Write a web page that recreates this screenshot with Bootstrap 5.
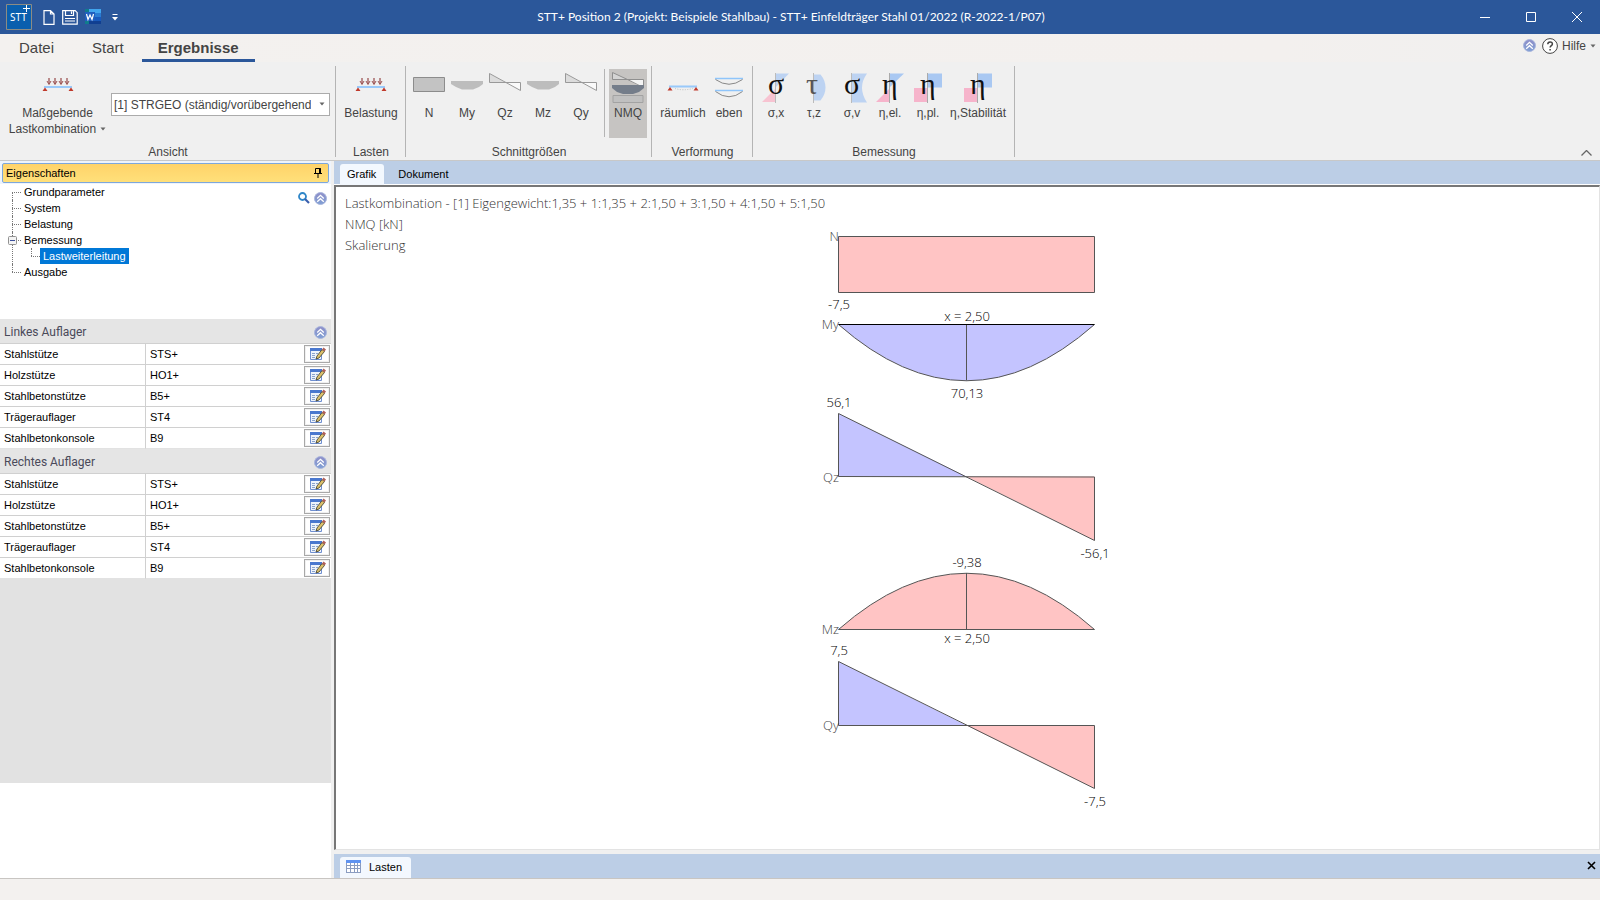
<!DOCTYPE html>
<html lang="de">
<head>
<meta charset="utf-8">
<meta name="viewport" content="width=device-width, initial-scale=1">
<title>STT+ Position 2</title>
<link href="https://cdn.jsdelivr.net/npm/bootstrap@5.3.0/dist/css/bootstrap.min.css" rel="stylesheet">
<style>
  body { font-family: "Liberation Sans", Arial, sans-serif; font-size: 12px; line-height: 16px; color: #444; background: #f0f0f0; }
  button { background: none; border: 0; padding: 0; color: inherit; }
  svg { display: block; flex: none; }
  .titlebar { background: #2b579a; color: #fff; height: 34px; font-family: Lato, sans-serif; }
  .quick { width: 314px; gap: 7px; padding-left: 6px; }
  .wincontrols { width: 332px; gap: 36px; padding-right: 18px; }
  .applogo { width: 26px; height: 26px; }
  .side { width: 331px; }
  .ribbontabs { height: 28px; background: linear-gradient(90deg, #f3f1ef, #f3f0ee 80%, #f0f0f0); font-size: 15px; padding-left: 19px; }
  .ribbontabs a { color: #444; text-decoration: none; height: 28px; line-height: 28px; margin-right: 38px; }
  .ribbontabs a.current { font-weight: bold; border-bottom: 3px solid #2b579a; padding: 0 16px; margin: 0 0 0 -20px; }
  .help { font-size: 12px; height: 23px; gap: 6px; }
  .ribbon { height: 99px; padding-top: 4px; border-bottom: 1px solid #c8c8c8; }
  .rgroup { border-right: 1px solid #b4b4b4; height: 91px; display: flex; flex-direction: column; justify-content: space-between; padding: 3px 3px 0 4px; }
  .glabel { line-height: 10px; text-align: center; }
  .tool { flex: none; width: 38px; height: 69px; display: flex; flex-direction: column; align-items: center; padding-top: 4px; white-space: nowrap; }
  .tool svg { overflow: visible; }
  .tool.pressed { background: #c6c4c2; }
  .tool.w-l { width: 58px; } .tool.w-m { width: 54px; } .tool.w-s { width: 62px; } .tool.w-xl { width: 107px; }
  .rule { width: 1px; height: 68px; background: #b4b4b4; margin: 0 4px; }
  .combo { width: 219px; height: 23px; }
  .combo select { appearance: none; width: 100%; height: 23px; border: 1px solid #ababab; border-radius: 0; background: #fff; padding: 0 18px 0 2px; color: #444; }
  .combo svg { position: absolute; right: 5px; top: 9px; pointer-events: none; }
  .props { background: #fff; font-size: 11px; color: #000; }
  .prophead { background: #eef4fc; padding: 2px 2px 0; height: 23px; }
  .prophead > div { height: 20px; border: 1px solid #7da7dc; border-radius: 2px; background: linear-gradient(#ffd369, #ffe07a); padding: 0 6px 0 3px; }
  .treebox { height: 135px; padding: 0 4px 0 12px; }
  .tree, .tree ul { list-style: none; margin: 0; padding: 0; }
  .tree li { position: relative; padding-left: 12px; }
  .tree li::before { content: ""; position: absolute; left: 0; top: 8px; width: 9px; border-top: 1px dotted #777; }
  .tree li::after { content: ""; position: absolute; left: 0; top: 0; bottom: 0; border-left: 1px dotted #777; }
  .tree li:first-child::after { top: 8px; }
  .tree li:last-child::after { bottom: auto; height: 8px; top: 0; }
  .tree ul { padding-left: 7px; }
  .tree a { color: #000; text-decoration: none; display: block; width: max-content; }
  .tree a.picked { background: #0078d7; color: #fff; padding: 0 3px; margin-left: -3px; }
  .expander { position: absolute; left: -4px; top: 4px; z-index: 1; }
  .secthead { background: #e5e5e5; height: 25px; padding: 2px 4px 0; font: 12px/22px Roboto, sans-serif; color: #4a4a5a; border-bottom: 1px solid #d0d0d0; }
  .ptable { width: 100%; border-collapse: separate; border-spacing: 0; }
  .ptable th, .ptable td { height: 21px; border-bottom: 1px solid #d0d0d0; padding: 0 0 0 4px; font-weight: normal; line-height: 18px; }
  .ptable th { width: 146px; border-right: 1px solid #d0d0d0; }
  .ptable tr:last-child > * { border-bottom-color: #e2e2e2; }
  .ptable .edit { width: 27px; padding: 0 1px 0 0; }
  .edit button { width: 26px; height: 18px; border: 1px solid #a8a8a8; background: #f0f0f0; display: flex; align-items: center; justify-content: center; }
  .filler { background: #e2e2e2; height: 204px; }
  .workarea { margin-left: 3px; }
  .strip { background: #bccee6; font-size: 11px; color: #000; }
  .strip.top { height: 24px; padding: 3px 6px 0; gap: 6px; border-bottom: 1px solid #fff; }
  .strip.bottom { height: 24px; padding: 3px 4px 0 6px; }
  .strip button { height: 21px; border-radius: 3px 3px 0 0; padding: 0 8px 2px; }
  .strip button.on { background: #f3f8fe; }
  .strip.top .on { padding: 0 8px 2px 7px; }
  .strip.bottom .on { padding: 0 9px 2px 6px; }
  .doc { background: #fff; border: solid; border-width: 2px 1px 1px 2px; border-color: #777 #e3e3e3 #e3e3e3 #777; display: grid; font-family: "Open Sans", sans-serif; font-size: 13px; font-weight: 300; }
  .doc > * { grid-area: 1 / 1; }
  .caption { padding: 6px 9px; line-height: 21px; color: #333; white-space: nowrap; }
  .diagram { justify-self: center; overflow: visible; fill: #000; }
  .diagram .ax { fill: #444; text-anchor: end; }
  .diagram .v { text-anchor: middle; }
  .diagram .neg { fill: #ffc4c4; } .diagram .pos { fill: #c4c4ff; }
  .diagram .ln { fill: none; stroke: #555; }
  .status { height: 22px; background: #f3f1ef; border-top: 1px solid #c8c5c2; }
</style>
</head>
<body class="d-flex flex-column min-vh-100">
<svg width="0" height="0" class="position-absolute" aria-hidden="true">
  <defs>
    <linearGradient id="gb" x2="0" y2="1"><stop stop-color="#8f8fc8"/><stop offset="1" stop-color="#7f9fd4"/></linearGradient>
    <symbol id="up" viewBox="0 0 13 13"><circle cx="6.500" cy="6.500" r="6" fill="url(#gb)" stroke="#a9b6dd"/><path d="M3.200 6.500 6.500 3.400 9.800 6.500M3.200 9.800 6.500 6.700 9.800 9.800" fill="none" stroke="#fff" stroke-width="1.300"/></symbol>
    <symbol id="load" viewBox="0 0 32 32"><path d="M7 5v6M13 5v6M19 5v6M25 5v6" stroke="#a86a6a" stroke-width="1.500"/><path d="M5 8l2 3.500L9 8M11 8l2 3.500L15 8M17 8l2 3.500L21 8M23 8l2 3.500L27 8" stroke="#9a5252" fill="none"/><path d="M2 14h28" stroke="#99c9fa" stroke-width="2"/><path d="M.500 18 3 14.500 5.500 18zM26.500 18 29 14.500 31.500 18z" fill="#c0392b"/></symbol>
    <symbol id="moment" viewBox="0 0 32 32"><path d="M0 8h32v3l-4 3-6 2.500H11L5 14 0 11z" fill="#bdbdbd"/></symbol>
    <symbol id="shear" viewBox="0 0 32 32"><path d="M.500.500v9H16z" fill="#dcdcdc"/><path d="M16 9.500h15.500v8z" fill="#fafafa"/><path d="M.500 9.500V.500L31.500 17.500v-8z" fill="none" stroke="#999"/></symbol>
    <symbol id="edit" viewBox="0 0 22 14"><path d="M0 0h22v14H0z" fill="#fff"/><path d="M4.500 1.500h11v11h-11z" fill="#eef3fb" stroke="#6f8fd0"/><path d="M4 1h12v3H4z" fill="#4a78cf"/><path d="M6 6.500h3M6 8.500h3M6 10.500h3M10 6.500h2" stroke="#8aa3cc"/><path d="M10 12 11 9 16 2.500 18.500 4.500 13 11z" fill="#dcc06a" stroke="#3a3a2a" stroke-width=".8"/><path d="M16 2.500 17.500.500 20 2.500 18.500 4.500z" fill="#b0605a"/></symbol>
    <symbol id="dd" viewBox="0 0 6 4"><path d="M.500.500h5L3 3.500z" fill="#666"/></symbol>
  </defs>
</svg>

<header class="titlebar d-flex align-items-center">
  <div class="quick d-flex align-items-center">
    <svg class="applogo" viewBox="0 0 26 26"><path d="M.500.500h25v25H.500z" fill="#0a5fae" stroke="#8c8c84"/><text x="4" y="17" font-size="10" fill="#fff" font-family="Noto Sans">STT</text><path d="M20.500 1v7M17 4.500h7" stroke="#fff"/></svg>
    <button class="ms-1" aria-label="Neu"><svg width="12" height="15" viewBox="0 0 12 15"><path d="M1 .700h6.500L11 4v10.300H1zM7.500.700V4H11" fill="none" stroke="#fff" stroke-width="1.200"/></svg></button>
    <button aria-label="Speichern"><svg width="16" height="15" viewBox="0 0 16 15"><path d="M.700.700h12.500l2 2v11.500H.700zM3.500.700v4.800h8V.700M9.500 1.500v2.500M3 8.500h10M3 11h10" fill="none" stroke="#fff" stroke-width="1.200"/></svg></button>
    <button aria-label="Word"><svg width="16" height="16" viewBox="0 0 16 16"><path d="M4 0h12v4H4z" fill="#41a5ee"/><path d="M4 4h12v4H4z" fill="#2b7cd3"/><path d="M4 8h12v4H4z" fill="#185abd"/><path d="M0 12h16v3H0z" fill="#103f91"/><path d="M0 0h4v15H0z" fill="#107c8c"/><path d="M0 3h10v9H0z" fill="#1f5fbf"/><path d="M1.500 5 3 10.500 5 6l2 4.500L8.500 5" fill="none" stroke="#fff" stroke-width="1.200"/></svg></button>
    <button class="ms-1" aria-label="Anpassen"><svg width="6" height="7" viewBox="0 0 6 7"><path d="M.500.500h5" stroke="#fff"/><path d="M0 3h6L3 6.500z" fill="#fff"/></svg></button>
  </div>
  <div class="flex-fill text-center text-nowrap">STT+ Position 2 (Projekt: Beispiele Stahlbau) - STT+ Einfeldträger Stahl 01/2022 (R-2022-1/P07)</div>
  <div class="d-flex justify-content-end wincontrols">
    <button aria-label="Minimieren"><svg width="10" height="10"><path d="M0 5.500h10" stroke="#fff"/></svg></button>
    <button aria-label="Maximieren"><svg width="10" height="10"><path d="M.500.500h9v9h-9z" fill="none" stroke="#fff"/></svg></button>
    <button aria-label="Schließen"><svg width="10" height="10"><path d="M0 0l10 10M10 0L0 10" stroke="#fff"/></svg></button>
  </div>
</header>

<nav class="ribbontabs d-flex">
  <a href="#">Datei</a>
  <a href="#">Start</a>
  <a href="#" class="current">Ergebnisse</a>
  <div class="help ms-auto d-flex align-items-center pe-1">
    <button aria-label="Einklappen"><svg width="13" height="13"><use href="#up"/></svg></button>
    <button class="d-flex align-items-center gap-1"><svg width="16" height="16" viewBox="0 0 16 16"><circle cx="8" cy="8" r="7.400" fill="#fff" stroke="#444"/><path d="M5.800 6.200c0-3 4.600-3 4.600-.2 0 1.700-2.300 1.700-2.300 3.600M8.100 11v1.400" fill="none" stroke="#444" stroke-width="1.500"/></svg>Hilfe<svg width="6" height="4"><use href="#dd"/></svg></button>
  </div>
</nav>

<section class="ribbon d-flex">
  <div class="rgroup" style="width:336px">
    <div class="d-flex">
      <button class="tool w-xl"><svg width="32" height="32"><use href="#load"/></svg>Maßgebende<span class="d-flex align-items-center gap-1">Lastkombination <svg width="6" height="4"><use href="#dd"/></svg></span></button>
      <div class="combo position-relative mt-4"><select aria-label="Lastkombination"><option>[1] STRGEO (ständig/vorübergehend)</option></select><svg width="6" height="4"><use href="#dd"/></svg></div>
    </div>
    <div class="glabel">Ansicht</div>
  </div>
  <div class="rgroup align-items-center" style="width:70px">
    <button class="tool w-l"><svg width="32" height="32"><use href="#load"/></svg>Belastung</button>
    <div class="glabel">Lasten</div>
  </div>
  <div class="rgroup" style="width:246px">
    <div class="d-flex">
      <button class="tool"><svg width="32" height="32"><path d="M.500 4.500h31v14H.500z" fill="#c3c3c3" stroke="#8c8c8c"/></svg>N</button>
      <button class="tool"><svg width="32" height="32"><use href="#moment"/></svg>My</button>
      <button class="tool"><svg width="32" height="32"><use href="#shear"/></svg>Qz</button>
      <button class="tool"><svg width="32" height="32"><use href="#moment"/></svg>Mz</button>
      <button class="tool"><svg width="32" height="32"><use href="#shear"/></svg>Qy</button>
      <div class="rule"></div>
      <button class="tool pressed"><svg width="32" height="32"><path d="M.500 6.500v-7L31.500 14V6.500z" fill="#d4d4d4" stroke="#8f8f8f"/><path d="M18 7h13v7z" fill="#f4f4f4"/><path d="M0 12h32v3l-5 4-6 2H11l-6-2-5-4z" fill="#747d8a"/><path d="M1 22.500h30v7H1z" fill="#c0c0c0" stroke="#a2a2a2"/></svg>NMQ</button>
    </div>
    <div class="glabel">Schnittgrößen</div>
  </div>
  <div class="rgroup" style="width:101px">
    <div class="d-flex">
      <button class="tool w-m"><svg width="32" height="32"><path d="M2 13.500h28" stroke="#99c9fa" stroke-width="2"/><path d="M8 15.500 Q16 18 26 15.500" fill="none" stroke="#bbb" stroke-dasharray="1 1.500"/><path d="M.500 17.500 3 14 5.500 17.500zM26.500 17.500 29 14 31.500 17.500z" fill="#c0392b"/></svg>räumlich</button>
      <button class="tool"><svg width="32" height="32"><path d="M2 5.500h28M2 17.500h28" stroke="#8fc5fb" stroke-width="1.500"/><path d="M2.500 6.500Q16 16 29.500 6.500M2.500 18.500Q16 29 29.500 18.500" fill="none" stroke="#888"/></svg>eben</button>
    </div>
    <div class="glabel">Verformung</div>
  </div>
  <div class="rgroup" style="width:262px">
    <div class="d-flex">
      <button class="tool"><svg width="32" height="32"><path d="M16 .500h13L16 14z" fill="#bdd3f2"/><path d="M16 29H2l14-14z" fill="#f7c3d1"/><path d="M15.500 0v30" stroke="#bbb"/><text x="8" y="21" font-family="Liberation Serif" font-size="30" fill="#111">σ</text></svg>σ,x</button>
      <button class="tool"><svg width="32" height="32"><path d="M15.500 1.500h7q5 6 5 13t-5 13h-7z" fill="#bdd3f2"/><path d="M15.500 0v30" stroke="#bbb"/><text x="8" y="21" font-family="Liberation Serif" font-size="30" fill="#555">τ</text></svg>τ,z</button>
      <button class="tool"><svg width="32" height="32"><path d="M16 .500h15q-10 14 0 29H16z" fill="#bdd3f2"/><path d="M15.500 0v30" stroke="#bbb"/><text x="8" y="21" font-family="Liberation Serif" font-size="30" fill="#111">σ</text></svg>σ,v</button>
      <button class="tool"><svg width="32" height="32"><path d="M16 .500h14L16 14z" fill="#a9c8f2"/><path d="M16 29H2l14-14z" fill="#f6b4cb"/><path d="M15.500 0v30" stroke="#aaa"/><text x="8" y="21" font-family="Liberation Serif" font-size="30" fill="#111">η</text></svg>η,el.</button>
      <button class="tool"><svg width="32" height="32"><path d="M16 .500h14v14H16z" fill="#a9c8f2"/><path d="M2 15h14v14H2z" fill="#f6b4cb"/><path d="M15.500 0v30" stroke="#aaa"/><text x="8" y="21" font-family="Liberation Serif" font-size="30" fill="#111">η</text></svg>η,pl.</button>
      <button class="tool w-s"><svg width="32" height="32"><path d="M16 .500h14v14H16z" fill="#a9c8f2"/><path d="M2 15h14v14H2z" fill="#f6b4cb"/><path d="M15.500 0v30" stroke="#aaa"/><text x="8" y="21" font-family="Liberation Serif" font-size="30" fill="#111">η</text></svg>η,Stabilität</button>
    </div>
    <div class="glabel">Bemessung</div>
  </div>
  <button class="ms-auto align-self-end me-2 mb-1" aria-label="Menüband einklappen"><svg width="11" height="6"><path d="M.500 5.500l5-5 5 5" fill="none" stroke="#666" stroke-width="1.300"/></svg></button>
</section>

<main class="d-flex flex-fill">
  <aside class="props side flex-shrink-0">
    <div class="prophead"><div class="d-flex align-items-center justify-content-between">Eigenschaften
      <button aria-label="Anheften"><svg width="8" height="10" viewBox="0 0 8 10"><path d="M1.500 5.500v-5h5v5M0 5.500h8M4 5.500V10" fill="none" stroke="#000"/><path d="M5 0h1.500v5.500H5z"/></svg></button></div></div>
    <div class="treebox d-flex justify-content-between">
      <ul class="tree">
        <li><a href="#">Grundparameter</a></li>
        <li><a href="#">System</a></li>
        <li><a href="#">Belastung</a></li>
        <li><svg class="expander" width="9" height="9" viewBox="0 0 9 9"><rect x=".500" y=".500" width="8" height="8" rx="1" fill="#f4f4f4" stroke="#919191"/><path d="M2 4.500h5" stroke="#3b4f9a"/></svg><a href="#">Bemessung</a>
          <ul><li><a href="#" class="picked">Lastweiterleitung</a></li></ul></li>
        <li><a href="#">Ausgabe</a></li>
      </ul>
      <div class="d-flex gap-1 pt-2">
        <button class="align-self-start" aria-label="Suchen"><svg width="12" height="12" viewBox="0 0 12 12"><circle cx="4.500" cy="4.500" r="3.500" fill="#fff" stroke="#2f86c8" stroke-width="1.800"/><path d="M7 7l4 4" stroke="#3a5fae" stroke-width="2.200"/></svg></button>
        <button class="align-self-start" aria-label="Alle einklappen"><svg width="13" height="13"><use href="#up"/></svg></button>
      </div>
    </div>
    <div class="secthead d-flex justify-content-between align-items-center">Linkes Auflager<button aria-label="Einklappen"><svg width="13" height="13"><use href="#up"/></svg></button></div>
    <table class="ptable"><tbody>
      <tr><th scope="row">Stahlstütze</th><td>STS+</td><td class="edit"><button aria-label="Bearbeiten"><svg width="22" height="14"><use href="#edit"/></svg></button></td></tr>
      <tr><th scope="row">Holzstütze</th><td>HO1+</td><td class="edit"><button aria-label="Bearbeiten"><svg width="22" height="14"><use href="#edit"/></svg></button></td></tr>
      <tr><th scope="row">Stahlbetonstütze</th><td>B5+</td><td class="edit"><button aria-label="Bearbeiten"><svg width="22" height="14"><use href="#edit"/></svg></button></td></tr>
      <tr><th scope="row">Trägerauflager</th><td>ST4</td><td class="edit"><button aria-label="Bearbeiten"><svg width="22" height="14"><use href="#edit"/></svg></button></td></tr>
      <tr><th scope="row">Stahlbetonkonsole</th><td>B9</td><td class="edit"><button aria-label="Bearbeiten"><svg width="22" height="14"><use href="#edit"/></svg></button></td></tr>
    </tbody></table>
    <div class="secthead d-flex justify-content-between align-items-center">Rechtes Auflager<button aria-label="Einklappen"><svg width="13" height="13"><use href="#up"/></svg></button></div>
    <table class="ptable"><tbody>
      <tr><th scope="row">Stahlstütze</th><td>STS+</td><td class="edit"><button aria-label="Bearbeiten"><svg width="22" height="14"><use href="#edit"/></svg></button></td></tr>
      <tr><th scope="row">Holzstütze</th><td>HO1+</td><td class="edit"><button aria-label="Bearbeiten"><svg width="22" height="14"><use href="#edit"/></svg></button></td></tr>
      <tr><th scope="row">Stahlbetonstütze</th><td>B5+</td><td class="edit"><button aria-label="Bearbeiten"><svg width="22" height="14"><use href="#edit"/></svg></button></td></tr>
      <tr><th scope="row">Trägerauflager</th><td>ST4</td><td class="edit"><button aria-label="Bearbeiten"><svg width="22" height="14"><use href="#edit"/></svg></button></td></tr>
      <tr><th scope="row">Stahlbetonkonsole</th><td>B9</td><td class="edit"><button aria-label="Bearbeiten"><svg width="22" height="14"><use href="#edit"/></svg></button></td></tr>
    </tbody></table>
    <div class="filler"></div>
  </aside>

  <div class="workarea flex-fill d-flex flex-column">
    <div class="strip top d-flex"><button class="on">Grafik</button><button>Dokument</button></div>
    <div class="doc flex-fill mb-1">
      <div class="caption">
        <div>Lastkombination - [1] Eigengewicht:1,35 + 1:1,35 + 2:1,50 + 3:1,50 + 4:1,50 + 5:1,50</div>
        <div>NMQ [kN]</div>
        <div>Skalierung</div>
      </div>
      <svg class="diagram" width="301" height="640" viewBox="817 187 301 640">
        <path class="neg" d="M838.500 236.500h256v56h-256z"/><path class="ln" d="M838.500 236.500h256v56h-256z"/>
        <text class="ax" x="839" y="241">N</text><text class="v" x="839" y="309">-7,5</text>
        <path class="pos" d="M838.500 324.500h256Q966.500 437 838.500 324.500z"/><path class="ln" d="M838.500 324.500Q966.500 437 1094.500 324.500M966.500 324.500v56"/><path d="M838.500 324.500h256" stroke="#000"/>
        <text class="ax" x="839" y="329">My</text><text class="v" x="967" y="321">x = 2,50</text><text class="v" x="967" y="398">70,13</text>
        <path class="pos" d="M838.500 413.500v63h128z"/><path class="neg" d="M966.500 476.500h128v64z"/><path class="ln" d="M838.500 476.500v-63l256 127v-63.500z"/>
        <text class="ax" x="839" y="482">Qz</text><text class="v" x="839" y="407">56,1</text><text class="v" x="1095" y="558">-56,1</text>
        <path class="neg" d="M838.500 629.500Q966.500 517 1094.500 629.500z"/><path class="ln" d="M838.500 629.500Q966.500 517 1094.500 629.500zM966.500 573v56"/>
        <text class="ax" x="839" y="634">Mz</text><text class="v" x="967" y="567">-9,38</text><text class="v" x="967" y="643">x = 2,50</text>
        <path class="pos" d="M838.500 661.500v64h128z"/><path class="neg" d="M966.500 725.500h128v63z"/><path class="ln" d="M838.500 725.500v-64l256 127v-63z"/>
        <text class="ax" x="839" y="730">Qy</text><text class="v" x="839" y="655">7,5</text><text class="v" x="1095" y="806">-7,5</text>
      </svg>
    </div>
    <div class="strip bottom d-flex justify-content-between align-items-center">
      <button class="on d-flex align-items-center gap-2"><svg width="15" height="13" viewBox="0 0 15 13"><path d="M0 0h15v13H0z" fill="#8a9cc0"/><path d="M0 0h15v3H0z" fill="#5f93f0"/><path d="M1 3h3v2H1zm4 0h3v2H5zm4 0h2v2H9zm3 0h2v2h-2zM1 6h3v2H1zm4 0h3v2H5zm4 0h2v2H9zm3 0h2v2h-2zM1 9h3v3H1zm4 0h3v3H5zm4 0h2v3H9zm3 0h2v3h-2z" fill="#fff"/></svg>Lasten</button>
      <button aria-label="Schließen" class="px-0 pb-1"><svg width="9" height="9"><path d="M1 1l7 7M8 1L1 8" stroke="#000" stroke-width="1.600"/></svg></button>
    </div>
  </div>
</main>
<footer class="status"></footer>
<script src="https://cdn.jsdelivr.net/npm/bootstrap@5.3.0/dist/js/bootstrap.bundle.min.js"></script>
</body>
</html>
